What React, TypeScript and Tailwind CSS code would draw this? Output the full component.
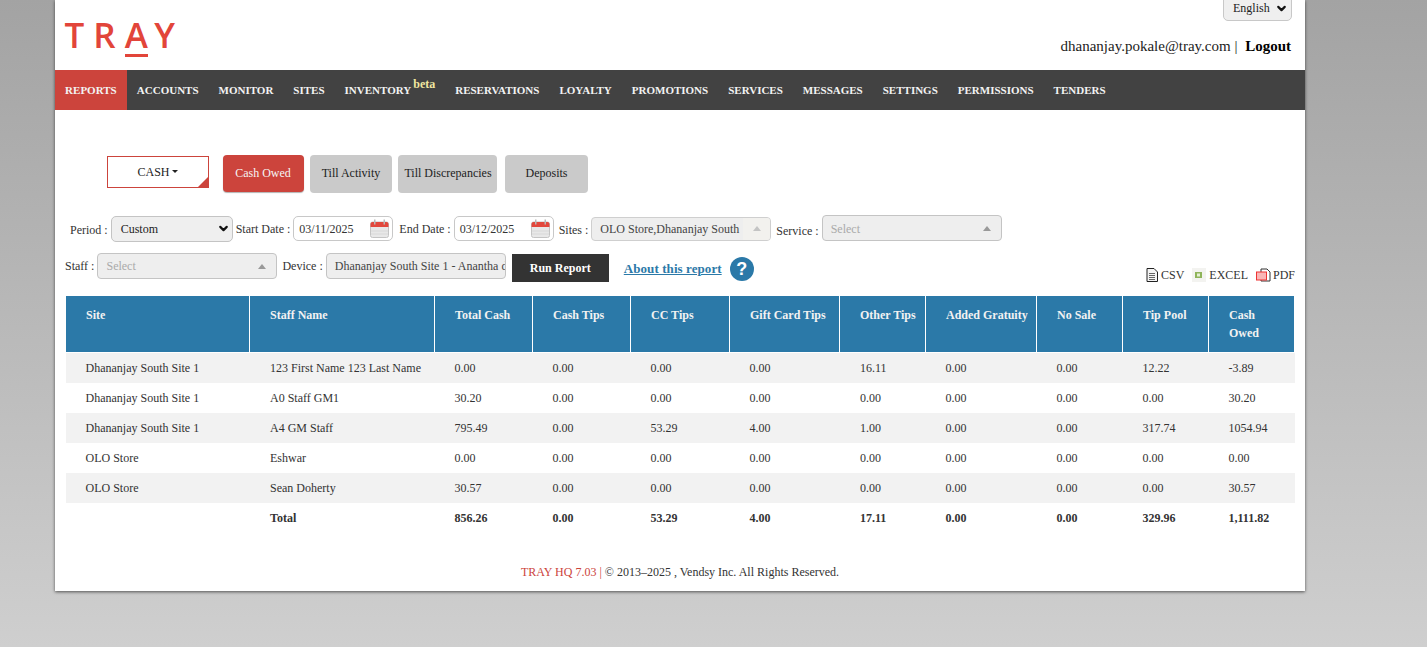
import { ChevronDown } from "lucide-react"

const NAV = ["ACCOUNTS", "MONITOR", "SITES", "INVENTORY", "RESERVATIONS", "LOYALTY", "PROMOTIONS", "SERVICES", "MESSAGES", "SETTINGS", "PERMISSIONS", "TENDERS"]

const COLUMNS = [
    { label: "Site", width: "w-[184px]", pad: "pl-[19.5px]" },
    { label: "Staff Name", width: "w-[185px]", pad: "pl-5" },
    { label: "Total Cash", width: "w-[98px]", pad: "pl-[19.5px]" },
    { label: "Cash Tips", width: "w-[98px]", pad: "pl-[19.5px]" },
    { label: "CC Tips", width: "w-[99px]", pad: "pl-[19.5px]" },
    { label: "Gift Card Tips", width: "w-[110px]", pad: "pl-[19.5px]" },
    { label: "Other Tips", width: "w-[86px]", pad: "pl-5" },
    { label: "Added Gratuity", width: "w-[111px]", pad: "pl-[19.5px]" },
    { label: "No Sale", width: "w-[86px]", pad: "pl-[19.5px]" },
    { label: "Tip Pool", width: "w-[86px]", pad: "pl-[19.5px]" },
    { label: "Cash Owed", width: "w-[86px]", pad: "pl-[19.5px]" },
]

const ROWS = [
    ["Dhananjay South Site 1", "123 First Name 123 Last Name", "0.00", "0.00", "0.00", "0.00", "16.11", "0.00", "0.00", "12.22", "-3.89"],
    ["Dhananjay South Site 1", "A0 Staff GM1", "30.20", "0.00", "0.00", "0.00", "0.00", "0.00", "0.00", "0.00", "30.20"],
    ["Dhananjay South Site 1", "A4 GM Staff", "795.49", "0.00", "53.29", "4.00", "1.00", "0.00", "0.00", "317.74", "1054.94"],
    ["OLO Store", "Eshwar", "0.00", "0.00", "0.00", "0.00", "0.00", "0.00", "0.00", "0.00", "0.00"],
    ["OLO Store", "Sean Doherty", "30.57", "0.00", "0.00", "0.00", "0.00", "0.00", "0.00", "0.00", "30.57"],
]

const TOTALS = ["", "Total", "856.26", "0.00", "53.29", "4.00", "17.11", "0.00", "0.00", "329.96", "1,111.82"]

function CalendarIcon() {
    return (
        <svg width="19" height="19" viewBox="0 0 19 19" className="shrink-0">
            <rect x="0.5" y="3" width="18" height="15.5" rx="2" fill="#e8e8e8" stroke="#c4c4c4" />
            <path d="M0.5 8V5a2 2 0 0 1 2-2h14a2 2 0 0 1 2 2v3z" fill="#e2483d" />
            <rect x="4" y="0.5" width="1.5" height="5" fill="#b9b9b9" />
            <rect x="13.5" y="0.5" width="1.5" height="5" fill="#b9b9b9" />
            <path d="M1 12h17M1 15h17" stroke="#d8d8d8" />
        </svg>
    )
}

function DateField({ value }: { value: string }) {
    return (
        <div className="flex h-[25px] w-[100px] items-center justify-between rounded-[5px] border border-[#c8c8c8] bg-white pl-[5px] pr-[3px] text-[#333]">
            <span>{value}</span>
            <CalendarIcon />
        </div>
    )
}

function Caret({ light }: { light?: boolean }) {
    return <span className={`h-0 w-0 shrink-0 border-x-4 border-b-[5px] border-x-transparent ${light ? "border-b-[#c4c4c4]" : "border-b-[#999]"}`} />
}

export default function App() {
    return (
        <div className="h-[647px] overflow-hidden bg-gradient-to-b from-[#a3a3a3] to-[#cfcfcf] font-['Liberation_Serif',serif] text-xs text-[#333]">
            <div className="ml-[55px] flex h-[591px] w-[1250px] flex-col bg-white shadow-[0_1px_3px_rgba(0,0,0,0.6)]">
                {/* header */}
                <div className="relative h-[70px] shrink-0">
                    <div className="pl-[9.5px] pt-[11px] font-['Open_Sans',sans-serif] text-[35px] font-semibold leading-[48px] text-[#e2453a]">
                        <span className="tracking-[9px]">T</span>
                        <span className="tracking-[9px]">R</span>
                        <span className="relative inline-block tracking-[6.5px]">A<span className="absolute bottom-[2px] left-0 h-[3px] w-[23px] bg-[#e2453a]" /></span>
                        <span>Y</span>
                    </div>
                    <div className="absolute right-[13px] top-[-5px] flex h-[26px] w-[69px] items-center justify-between rounded-[5px] border border-[#c8c8c8] bg-[#efefef] pl-[9px] pr-[3px] text-[#222]">
                        <span>English</span>
                        <ChevronDown size={13} strokeWidth={4} className="text-[#111]" />
                    </div>
                    <div className="absolute right-[14px] top-[37px] whitespace-nowrap text-[15px] leading-[18px] text-[#222]">
                        dhananjay.pokale@tray.com | <b className="ml-[4px] text-black">Logout</b>
                    </div>
                </div>

                {/* nav */}
                <div className="flex h-10 shrink-0 items-center bg-[#424242] text-[11px] font-bold text-[#f3f3f3]">
                    <div className="flex h-full w-[71.8px] items-center justify-center bg-[#cc443c]">REPORTS</div>
                    {NAV.map((item) => (
                        <div key={item} className="relative flex h-full items-center px-[10px]">
                            {item}
                            {item === "INVENTORY" && <span className="ml-[2px] mt-[-13px] w-[22px] text-xs text-[#f0e6a0]">beta</span>}
                        </div>
                    ))}
                </div>

                {/* report tabs */}
                <div className="ml-[52px] mt-[45px] flex h-[38px] shrink-0 items-start">
                    <div className="relative mt-[1px] flex h-8 w-[102px] items-center justify-center border border-[#cc443c] pb-[1px] pr-[1px] text-[#222]">
                        CASH
                        <span className="ml-[2px] h-0 w-0 border-x-[3.5px] border-t-[3.5px] border-x-transparent border-t-[#222]" />
                        <span className="absolute bottom-0 right-0 h-0 w-0 border-b-[10px] border-l-[10px] border-b-[#cc443c] border-l-transparent" />
                    </div>
                    <div className="ml-[14px] flex h-[37px] w-[81px] items-center justify-center rounded-[4px] bg-[#cc443c] pb-[1px] pr-[1px] text-[#f5f5f5] shadow-[0_1px_1px_rgba(0,0,0,0.3)]">Cash Owed</div>
                    <div className="ml-[6px] flex h-[38px] w-[82px] items-center justify-center rounded-[4px] bg-[#cacaca] pb-[2px] text-[#222]">Till Activity</div>
                    <div className="ml-[6px] flex h-[38px] w-[99px] items-center justify-center rounded-[4px] bg-[#cacaca] pb-[2px] pl-[1px] text-[#222]">Till Discrepancies</div>
                    <div className="ml-[8px] flex h-[38px] w-[83px] items-center justify-center rounded-[4px] bg-[#cacaca] pb-[2px] text-[#222]">Deposits</div>
                </div>

                {/* filters */}
                <div className="ml-[15px] mt-[22px] flex h-[27px] shrink-0 items-center">
                    <span className="mt-[2px]">Period :</span>
                    <div className="ml-[3px] flex h-[26px] w-[122px] items-center justify-between rounded-[5px] border border-[#c4c4c4] bg-[#efefef] pl-[9px] pr-[2px] text-[#222]">
                        <span>Custom</span>
                        <ChevronDown size={13} strokeWidth={4} className="text-[#111]" />
                    </div>
                    <span className="ml-[3px] mr-[3px]">Start Date :</span>
                    <DateField value="03/11/2025" />
                    <span className="ml-[6px] mr-[3px]">End Date :</span>
                    <DateField value="03/12/2025" />
                    <span className="ml-[5px] mr-[3px] mt-[2px]">Sites :</span>
                    <div className="flex h-[24px] w-[180px] items-center overflow-hidden rounded-[4px] border border-[#cfcfcf] bg-[#eeeeee] pl-2 text-[#444]">
                        <span className="whitespace-nowrap">OLO Store,Dhananjay South</span>
                        <span className="ml-auto flex h-full w-[27px] items-center justify-center bg-[#f2f1ee]"><Caret light /></span>
                    </div>
                    <span className="ml-[5px] mr-[3px] mt-[4px]">Service :</span>
                    <div className="mb-[1px] flex h-[26px] w-[180px] items-center justify-between rounded-[4px] border border-[#c4c4c4] bg-[#eeeeee] pl-2 pr-[10px] pt-[1px] text-[#aaa]">
                        <span>Select</span>
                        <Caret />
                    </div>
                </div>

                <div className="relative ml-[10px] mt-[10px] flex h-[28px] shrink-0 items-center">
                    <span>Staff :</span>
                    <div className="ml-[3px] flex h-[26px] w-[180px] items-center justify-between rounded-[4px] border border-[#c4c4c4] bg-[#eeeeee] pl-2 pr-[10px] text-[#aaa]">
                        <span>Select</span>
                        <Caret />
                    </div>
                    <span className="ml-[5px] mr-[3px]">Device :</span>
                    <div className="flex h-[26px] w-[180px] items-center overflow-hidden rounded-[4px] border border-[#c4c4c4] bg-[#eeeeee] pl-2 text-[#444]">
                        <span className="whitespace-nowrap">Dhananjay South Site 1 - Anantha d</span>
                    </div>
                    <div className="ml-[6px] mt-[4px] flex h-[28px] w-[97px] items-center justify-center bg-[#333] pb-[1px] font-bold text-white">Run Report</div>
                    <a className="ml-[15px] mt-[6px] text-[13px] font-bold tracking-[0.08px] text-[#2b79a8] underline">About this report</a>
                    <span className="ml-[8px] mt-[6px] flex h-6 w-6 items-center justify-center rounded-full bg-[#2b79a8] font-['Liberation_Sans',sans-serif] text-[18px] font-bold text-white">?</span>
                    <div className="absolute right-[10px] top-[15px] flex items-center text-[12px] leading-4 text-[#333]">
                        <svg width="12" height="14" viewBox="0 0 12 14" className="mr-[3px]">
                            <path d="M1 0.5h7l3.5 3.5v9.5H1z" fill="#f4f4f4" stroke="#222" />
                            <path d="M3 5.5h6M3 7.5h6M3 9.5h6M3 11.5h6" stroke="#666" />
                        </svg>
                        <span>CSV</span>
                        <svg width="14" height="14" viewBox="0 0 14 14" className="ml-[8px] mr-[3px]">
                            <rect width="14" height="14" fill="#f3f3f0" />
                            <rect x="3" y="4" width="7" height="6" fill="#8fb45a" />
                            <rect x="5" y="5.5" width="3" height="3" fill="#e6f0d4" />
                        </svg>
                        <span>EXCEL</span>
                        <svg width="15" height="14" viewBox="0 0 15 14" className="ml-[8px] mr-[2px]">
                            <path d="M5 1h6l3 3v9H5z" fill="#fff" stroke="#333" />
                            <rect x="0.5" y="4" width="10" height="8" fill="#f9b5b5" stroke="#e33" />
                        </svg>
                        <span>PDF</span>
                    </div>
                </div>

                {/* table */}
                <div className="ml-[11px] mt-[16px] w-[1229px] shrink-0">
                    <div className="flex h-[57px] w-[1228px] border-b border-white bg-[#2b79a8] font-bold leading-[18px] text-[#f2f2f2]">
                        {COLUMNS.map((col) => (
                            <div key={col.label} className={`${col.width} shrink-0 border-r border-white pl-5 pt-[10px] last:border-r-0 last:pr-5`}>{col.label}</div>
                        ))}
                    </div>
                    {ROWS.map((row, i) => (
                        <div key={i} className={`flex h-[30px] items-center ${i % 2 === 0 ? "bg-[#f2f2f2]" : "bg-white"}`}>
                            {row.map((cell, j) => (
                                <div key={j} className={`${COLUMNS[j].width} ${COLUMNS[j].pad} shrink-0 whitespace-nowrap`}>{cell}</div>
                            ))}
                        </div>
                    ))}
                    <div className="flex h-[30px] items-center font-bold">
                        {TOTALS.map((cell, j) => (
                            <div key={j} className={`${COLUMNS[j].width} ${COLUMNS[j].pad} shrink-0 whitespace-nowrap`}>{cell}</div>
                        ))}
                    </div>
                </div>

                {/* footer */}
                <div className="mt-[30px] text-center leading-[18px]">
                    <span className="text-[#cc443c]">TRAY HQ 7.03 | </span>© 2013–2025 , Vendsy Inc. All Rights Reserved.
                </div>
            </div>
        </div>
    )
}
